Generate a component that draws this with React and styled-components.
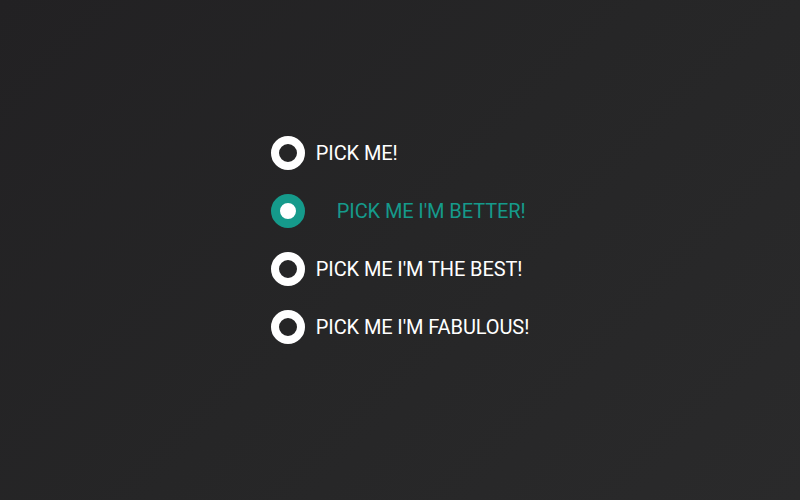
import React, { useState } from 'react';
import styled, { createGlobalStyle } from 'styled-components';

const GlobalStyle = createGlobalStyle`
  html, body {
    margin: 0;
    height: 100%;
  }
  body {
    background: linear-gradient(135deg, #222123 0%, #262627 50%, #2a2a2b 100%);
    font-family: Roboto, "Liberation Sans", sans-serif;
  }
`;

const options = [
  'PICK ME!',
  "PICK ME I'M BETTER!",
  "PICK ME I'M THE BEST!",
  "PICK ME I'M FABULOUS!",
];

const Page = styled.div`
  width: 800px;
  height: 500px;
  display: flex;
  align-items: center;
  justify-content: center;
`;

const Group = styled.div`
  display: flex;
  flex-direction: column;
  gap: 24px;
  margin-top: -20px;
`;

const Option = styled.label`
  display: flex;
  align-items: center;
  height: 34px;
  cursor: pointer;
`;

const HiddenInput = styled.input`
  display: none;
`;

const Dot = styled.span`
  box-sizing: border-box;
  width: 34px;
  height: 34px;
  border-radius: 50%;
  border: ${p => (p.checked ? '9px solid #159a8b' : '8px solid #ffffff')};
  background: ${p => (p.checked ? '#ffffff' : '#252526')};
  flex-shrink: 0;
  transition: all 0.2s ease;
`;

const Text = styled.span`
  margin-left: ${p => (p.checked ? '32px' : '11px')};
  font-size: 20px;
  color: ${p => (p.checked ? '#159a8b' : '#ffffff')};
  letter-spacing: -0.1px;
  transition: all 0.2s ease;
`;

const App = () => {
  const [selected, setSelected] = useState(1);

  return (
    <Page>
      <GlobalStyle />
      <Group>
        {options.map((text, index) => (
          <Option key={index}>
            <HiddenInput
              type="radio"
              name="pick"
              checked={selected === index}
              onChange={() => setSelected(index)}
            />
            <Dot checked={selected === index} />
            <Text checked={selected === index}>{text}</Text>
          </Option>
        ))}
      </Group>
    </Page>
  );
};

export default App;
